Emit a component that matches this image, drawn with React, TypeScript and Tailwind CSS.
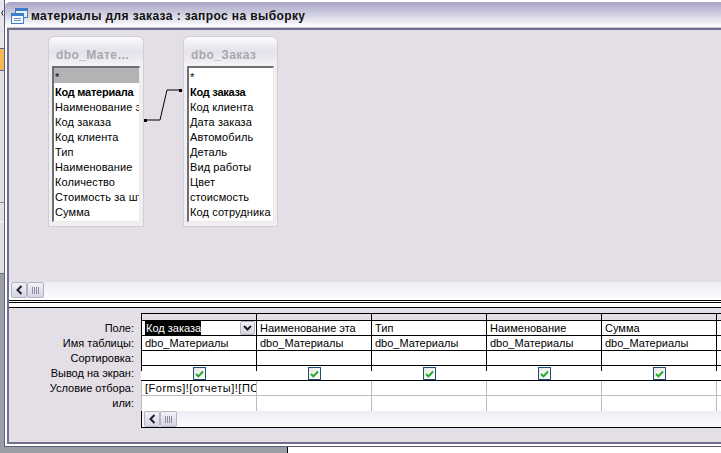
const FONT = "[font-family:'Liberation_Sans',sans-serif]";

const t1 = ["*", "Код материала", "Наименование этапа", "Код заказа", "Код клиента", "Тип", "Наименование", "Количество", "Стоимость за штуку", "Сумма"];
const t2 = ["*", "Код заказа", "Код клиента", "Дата заказа", "Автомобиль", "Деталь", "Вид работы", "Цвет", "стоисмость", "Код сотрудника"];

function ScrollBar() {
  return (
    <div className="flex h-[16px] shrink-0 items-stretch bg-gradient-to-b from-[#eeedf4] to-[#fcfcfd] pl-[2px]">
      <div className="flex w-[16px] items-center justify-center rounded-[2px] border border-[#b5b3c6] bg-gradient-to-b from-[#f2f1f6] to-[#d6d4e2]">
        <svg width="9" height="10" viewBox="0 0 9 10"><path d="M6.5 1 L2.5 5 L6.5 9" fill="none" stroke="#1f1f2a" strokeWidth="2" /></svg>
      </div>
      <div className="flex w-[17px] items-center justify-center gap-px rounded-[2px] border border-[#b5b3c6] bg-gradient-to-b from-[#f2f1f6] to-[#d6d4e2]">
        <i className="h-[7px] w-px bg-[#8f8da6]" /><i className="h-[7px] w-px bg-[#8f8da6]" /><i className="h-[7px] w-px bg-[#8f8da6]" /><i className="h-[7px] w-px bg-[#8f8da6]" />
      </div>
    </div>
  );
}

function FieldList({ title, rows, className, first }: { title: string; rows: string[]; className: string; first?: boolean }) {
  return (
    <div className={`absolute top-[37px] flex h-[191px] flex-col rounded-t-[6px] border border-[#cfcdd6] bg-[#f0eff3] ${className}`}>
      <div className="flex h-[29px] shrink-0 items-center rounded-t-[6px] bg-gradient-to-b from-[#fbfbfc] via-[#e4e2ea] to-[#f4f3f6] pl-[7px] pt-[6px] text-[12px] font-bold tracking-[0.4px] text-[#a8a8ae]">
        {title}
      </div>
      <div className="mb-[4px] ml-[3px] mr-[3px] flex-1 overflow-hidden border-t-2 border-l-2 border-[#6f6e72] border-b border-r border-b-[#f3e8e0] border-r-[#f3e8e0] bg-white">
        {rows.map((r, i) => (
          <div key={i} className={`h-[15px] whitespace-nowrap pl-px text-[11px] leading-[19px] text-black ${i === 0 && first ? "bg-[#b3b3b6]" : ""} ${i === 1 ? "font-bold tracking-[-0.25px]" : "tracking-[0.1px]"}`}>
            {r}
          </div>
        ))}
      </div>
    </div>
  );
}

function Check() {
  return (
    <div className="flex h-[13px] w-[13px] items-center justify-center border border-[#1f4e79] bg-gradient-to-br from-[#e8e8e2] to-white">
      <svg width="9" height="8" viewBox="0 0 9 8"><path d="M1 4 L3.4 6.4 L8 1.5" fill="none" stroke="#22a82a" strokeWidth="2" /></svg>
    </div>
  );
}

const field = ["Код заказа", "Наименование эта", "Тип", "Наименование", "Сумма", ""];
const table = ["dbo_Материалы", "dbo_Материалы", "dbo_Материалы", "dbo_Материалы", "dbo_Материалы", ""];
const cols = [0, 1, 2, 3, 4, 5];

function Row({ label, children }: { label: string; children: React.ReactNode }) {
  return (
    <div className="flex h-[15px] shrink-0">
      <div className="w-[132px] shrink-0 pr-[7px] text-right text-[11px] leading-[14px] text-black">{label}</div>
      <div className="flex min-w-0 flex-1">{children}</div>
    </div>
  );
}

function cell(i: number, extra: string) {
  return `${i === 5 ? "flex-1 min-w-0" : "w-[115px] shrink-0"} overflow-hidden whitespace-nowrap pl-[3px] text-[11px] leading-[14px] text-black ${extra}`;
}

export default function App() {
  return (
    <div className={`flex h-[453px] w-[721px] overflow-hidden bg-[#9b9ea6] ${FONT}`}>
      <div className="flex w-[4px] shrink-0 flex-col">
        <div className="flex h-[48px] flex-col bg-[#e8e4ec] pt-[10px]">
          <svg width="4" height="6" viewBox="0 0 4 6"><path d="M3 0.5 Q0.5 3 3 5.5" fill="none" stroke="#222" /></svg>
        </div>
        <div className="h-[23px] border-y border-[#5a5f9a] bg-[#f6b850]" />
        <div className="h-[132px] border-b border-[#8b8b92] bg-[#e4dfe7]" />
        <div className="h-[19px] border-b border-[#f5f4f6] bg-[#e4dfe7]" />
        <div className="h-[52px] border-b border-[#6e6e76] bg-[#e4dfe7]" />
        <div className="flex-1 bg-[#9b9ea6]" />
      </div>
      <div className="flex min-w-0 flex-1 flex-col">
        <div className="flex h-[447px] shrink-0 flex-col border-l border-b border-[#5a5c80] bg-white pl-[2px] pb-[2px]">
          <div className="-ml-[2px] flex h-[27px] shrink-0 items-center gap-[3px] rounded-tl-[6px] border-t-2 border-t-white bg-gradient-to-b from-[#a8a4c4] to-white pl-[6px] pt-[3px]">
            <svg width="17" height="16" viewBox="0 0 17 16">
              <rect x="4.5" y="0.5" width="12" height="9" fill="#eaf2fb" stroke="#3f7fc6" />
              <rect x="4.5" y="0.5" width="12" height="2.5" fill="#3f7fc6" />
              <rect x="0.5" y="5.5" width="12" height="10" fill="#f5f8fc" stroke="#3f7fc6" />
              <rect x="0.5" y="5.5" width="12" height="2.5" fill="#3f7fc6" />
              <path d="M3 10.5h7M3 12.5h7" stroke="#6d93c4" />
            </svg>
            <span className="whitespace-nowrap text-[12px] font-bold tracking-[0.4px] text-[#111]">материалы для заказа : запрос на выборку</span>
          </div>
          <div className="h-px shrink-0 bg-[#c9c8d0]" />
          <div className="flex min-h-0 flex-1 flex-col border-l-2 border-t-2 border-b-2 border-[#6f6f8e]">
            <div className="relative min-h-0 flex-1 bg-[#e4dfe7]">
              <svg className="absolute -left-[9px] -top-[31px]" width="300" height="130">
                <path d="M144 121 H160 L167 91 H180" fill="none" stroke="#000" />
                <rect x="144" y="120" width="3" height="3" fill="#000" />
                <rect x="179" y="90" width="3" height="3" fill="#000" />
              </svg>
              <div className="absolute -left-[9px] -top-[31px]">
                <FieldList title="dbo_Мате…" rows={t1} first className="left-[48px] w-[96px]" />
                <FieldList title="dbo_Заказ" rows={t2} className="left-[183px] w-[95px]" />
              </div>
            </div>
            <ScrollBar />
            <div className="flex h-[10px] shrink-0 flex-col bg-white pt-[2px]">
              <div className="h-px bg-black" />
              <div className="mt-px h-px bg-black" />
              <div className="mt-[4px] h-px bg-black" />
            </div>
            <div className="flex h-[134px] shrink-0 flex-col bg-[#e4dfe7] pt-[5px]">
              <div className="ml-[132px] flex h-[8px] shrink-0 border-y border-black">
                {cols.map((i) => <div key={i} className={`${i === 5 ? "flex-1" : "w-[115px]"} border-l border-black`} />)}
              </div>
              <Row label="Поле:">
                {cols.map((i) => (
                  <div key={i} className={cell(i, "relative border-l border-b border-black bg-white")}>
                    {i === 0 ? (
                      <>
                        <span className="inline-block w-[56px] bg-black pl-px text-white">{field[i]}</span>
                        <div className="absolute right-px top-0 flex h-[14px] w-[15px] items-center justify-center rounded-[2px] border border-[#b5b3c6] bg-gradient-to-b from-[#f2f1f6] to-[#d6d4e2]">
                          <svg width="9" height="6" viewBox="0 0 9 6"><path d="M1 1 L4.5 4.5 L8 1" fill="none" stroke="#1f1f2a" strokeWidth="2" /></svg>
                        </div>
                      </>
                    ) : field[i]}
                  </div>
                ))}
              </Row>
              <Row label="Имя таблицы:">
                {cols.map((i) => <div key={i} className={cell(i, "border-l border-b border-black bg-white")}>{table[i]}</div>)}
              </Row>
              <Row label="Сортировка:">
                {cols.map((i) => <div key={i} className={cell(i, "border-l border-b border-black bg-white")} />)}
              </Row>
              <Row label="Вывод на экран:">
                {cols.map((i) => (
                  <div key={i} className={cell(i, "relative flex justify-center border-b border-black bg-white !pl-[2px] pt-px")}>
                    <div className="absolute left-0 top-0 h-[5px] w-px bg-black" />
                    {i < 5 && <Check />}
                  </div>
                ))}
              </Row>
              <Row label="Условие отбора:">
                {cols.map((i) => <div key={i} className={cell(i, "border-l border-b border-l-[#bdbdbd] border-b-[#bdbdbd] bg-white tracking-[0.5px]")}>{i === 0 ? "[Forms]![отчеты]![ПСС" : ""}</div>)}
              </Row>
              <Row label="или:">
                {cols.map((i) => <div key={i} className={cell(i, "border-l border-[#bdbdbd] bg-white")} />)}
              </Row>
              <div className="ml-[132px] shrink-0 border-l border-b border-black">
                <ScrollBar />
              </div>
            </div>
          </div>
        </div>
        <div className="flex flex-1">
          <div className="w-[283px] bg-[#9b9ea6]" />
          <div className="flex-1 border-l border-black bg-white" />
        </div>
      </div>
    </div>
  );
}
